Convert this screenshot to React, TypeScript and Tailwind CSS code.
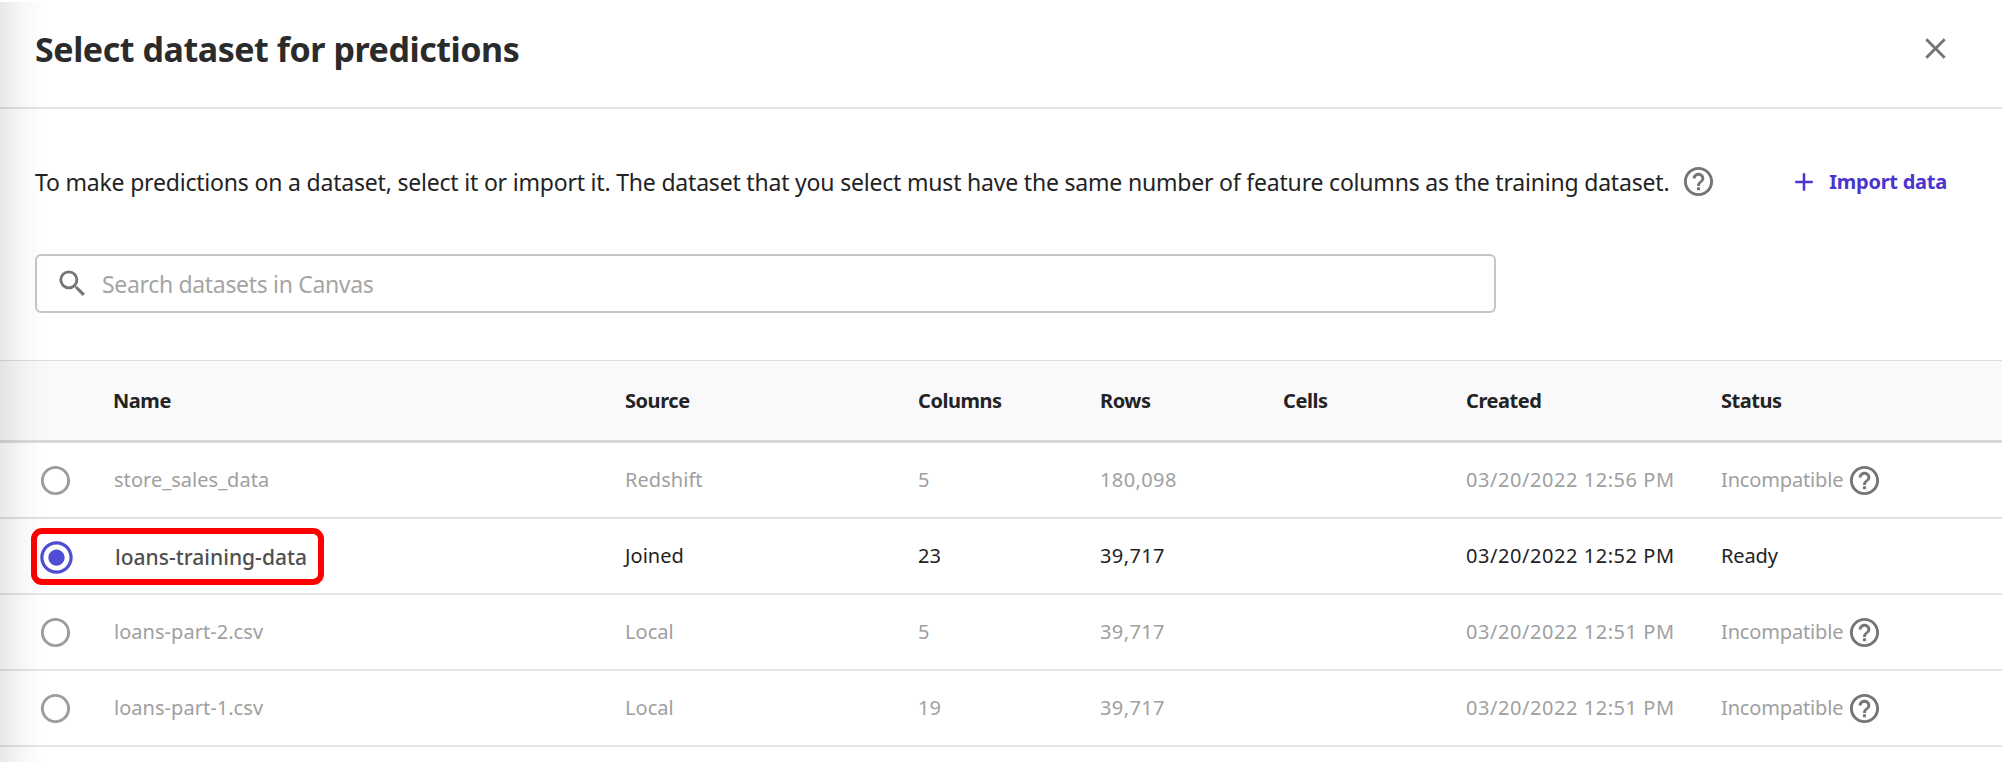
import {
  MdAdd,
  MdClose,
  MdHelpOutline,
  MdRadioButtonChecked,
  MdRadioButtonUnchecked,
  MdSearch,
} from "react-icons/md";

interface Dataset {
  name: string;
  source: string;
  columns: string;
  rows: string;
  created: string;
  status: string;
  compatible: boolean;
}

const datasets: Dataset[] = [
  { name: "store_sales_data", source: "Redshift", columns: "5", rows: "180,098", created: "03/20/2022 12:56 PM", status: "Incompatible", compatible: false },
  { name: "loans-training-data", source: "Joined", columns: "23", rows: "39,717", created: "03/20/2022 12:52 PM", status: "Ready", compatible: true },
  { name: "loans-part-2.csv", source: "Local", columns: "5", rows: "39,717", created: "03/20/2022 12:51 PM", status: "Incompatible", compatible: false },
  { name: "loans-part-1.csv", source: "Local", columns: "19", rows: "39,717", created: "03/20/2022 12:51 PM", status: "Incompatible", compatible: false },
];

const headings = ["Name", "Source", "Columns", "Rows", "Cells", "Created", "Status"];

const grid =
  "grid grid-cols-[113px_512px_293px_182px_183px_183px_255px_1fr] items-center whitespace-nowrap";

function Row({ dataset, first }: { dataset: Dataset; first: boolean }) {
  const on = dataset.compatible;
  return (
    <div
      className={`${grid} relative h-[76px] border-b-2 text-[20px] ${first ? "border-[#e0e0e0]" : "border-[#e4e4e4]"} ${on ? "text-[#232323]" : "text-[#a0a0a0]"}`}
    >
      {on ? (
        <MdRadioButtonChecked className="relative top-px ml-[37px] size-[39px] text-[#4f4dd3]" />
      ) : (
        <MdRadioButtonUnchecked className="ml-[38px] size-[35px] text-[#9d9d9d]" />
      )}
      {on ? (
        <span className="relative top-[2px] pl-[2px] text-[21px] font-medium tracking-[0.02px] text-[#505050]">
          {dataset.name}
        </span>
      ) : (
        <span className="pl-px tracking-[0.04px]">{dataset.name}</span>
      )}
      <span className="tracking-[0.05px]">{dataset.source}</span>
      <span>{dataset.columns}</span>
      <span className="tracking-[0.4px]">{dataset.rows}</span>
      <span />
      <span className="tracking-[0.55px]">{dataset.created}</span>
      <span className="flex items-center gap-[4px] tracking-[-0.15px]">
        {dataset.status}
        {!on && <MdHelpOutline className="size-[35px] text-[#757575]" />}
      </span>
      {on && (
        <div className="absolute left-[31px] top-[9px] h-[57px] w-[293px] rounded-[11px] border-6 border-[#ff0000]" />
      )}
    </div>
  );
}

export default function App() {
  return (
    <div className="relative h-[762px] w-[2002px] overflow-hidden bg-white font-['Noto_Sans',sans-serif] text-[#232323]">
      <header className="flex h-[109px] items-center justify-between border-b-2 border-[#e2e2e2] pb-[10px] pl-[35px] pr-[49px]">
        <h1 className="pt-[2px] text-[34px] font-bold tracking-[-0.45px] text-[#2b2b2b]">
          Select dataset for predictions
        </h1>
        <MdClose className="size-[35px] text-[#757575]" />
      </header>

      <div className="flex h-[145px] items-center pl-[35px] pr-[55px]">
        <p className="whitespace-nowrap pt-px text-[23px] tracking-[-0.195px]">
          To make predictions on a dataset, select it or import it. The dataset that you select must
          have the same number of feature columns as the training dataset.
        </p>
        <MdHelpOutline className="ml-[12px] size-[35px] text-[#757575]" />
        <button className="ml-auto flex items-center gap-[10px] text-[20px] font-bold tracking-[-0.25px] text-[#4a35d0]">
          <MdAdd className="size-[30px]" />
          Import data
        </button>
      </div>

      <div className="ml-[35px] flex h-[59px] w-[1461px] items-center rounded-[6px] border-2 border-[#c6c6c6] pl-[18px]">
        <MdSearch className="size-[35px] text-[#757575]" />
        <input
          className="ml-[12px] flex-1 pt-[2px] text-[23px] tracking-[-0.33px] outline-none placeholder:text-[#a5a5a5]"
          placeholder="Search datasets in Canvas"
        />
      </div>

      <div className="mt-[47px]">
        <div
          className={`${grid} h-[83px] border-b-3 border-t border-b-[#d9d9d9] border-t-[#dcdcdc] bg-[#f9f9fb] text-[20px] font-bold tracking-[-0.45px]`}
        >
          <span />
          {headings.map((heading) => (
            <span key={heading}>{heading}</span>
          ))}
        </div>
        {datasets.map((dataset, index) => (
          <Row key={dataset.name} dataset={dataset} first={index === 0} />
        ))}
      </div>

      <div className="pointer-events-none absolute bottom-0 left-0 top-[2px] w-[46px] bg-linear-to-r from-black/9 via-black/3 to-transparent" />
    </div>
  );
}
